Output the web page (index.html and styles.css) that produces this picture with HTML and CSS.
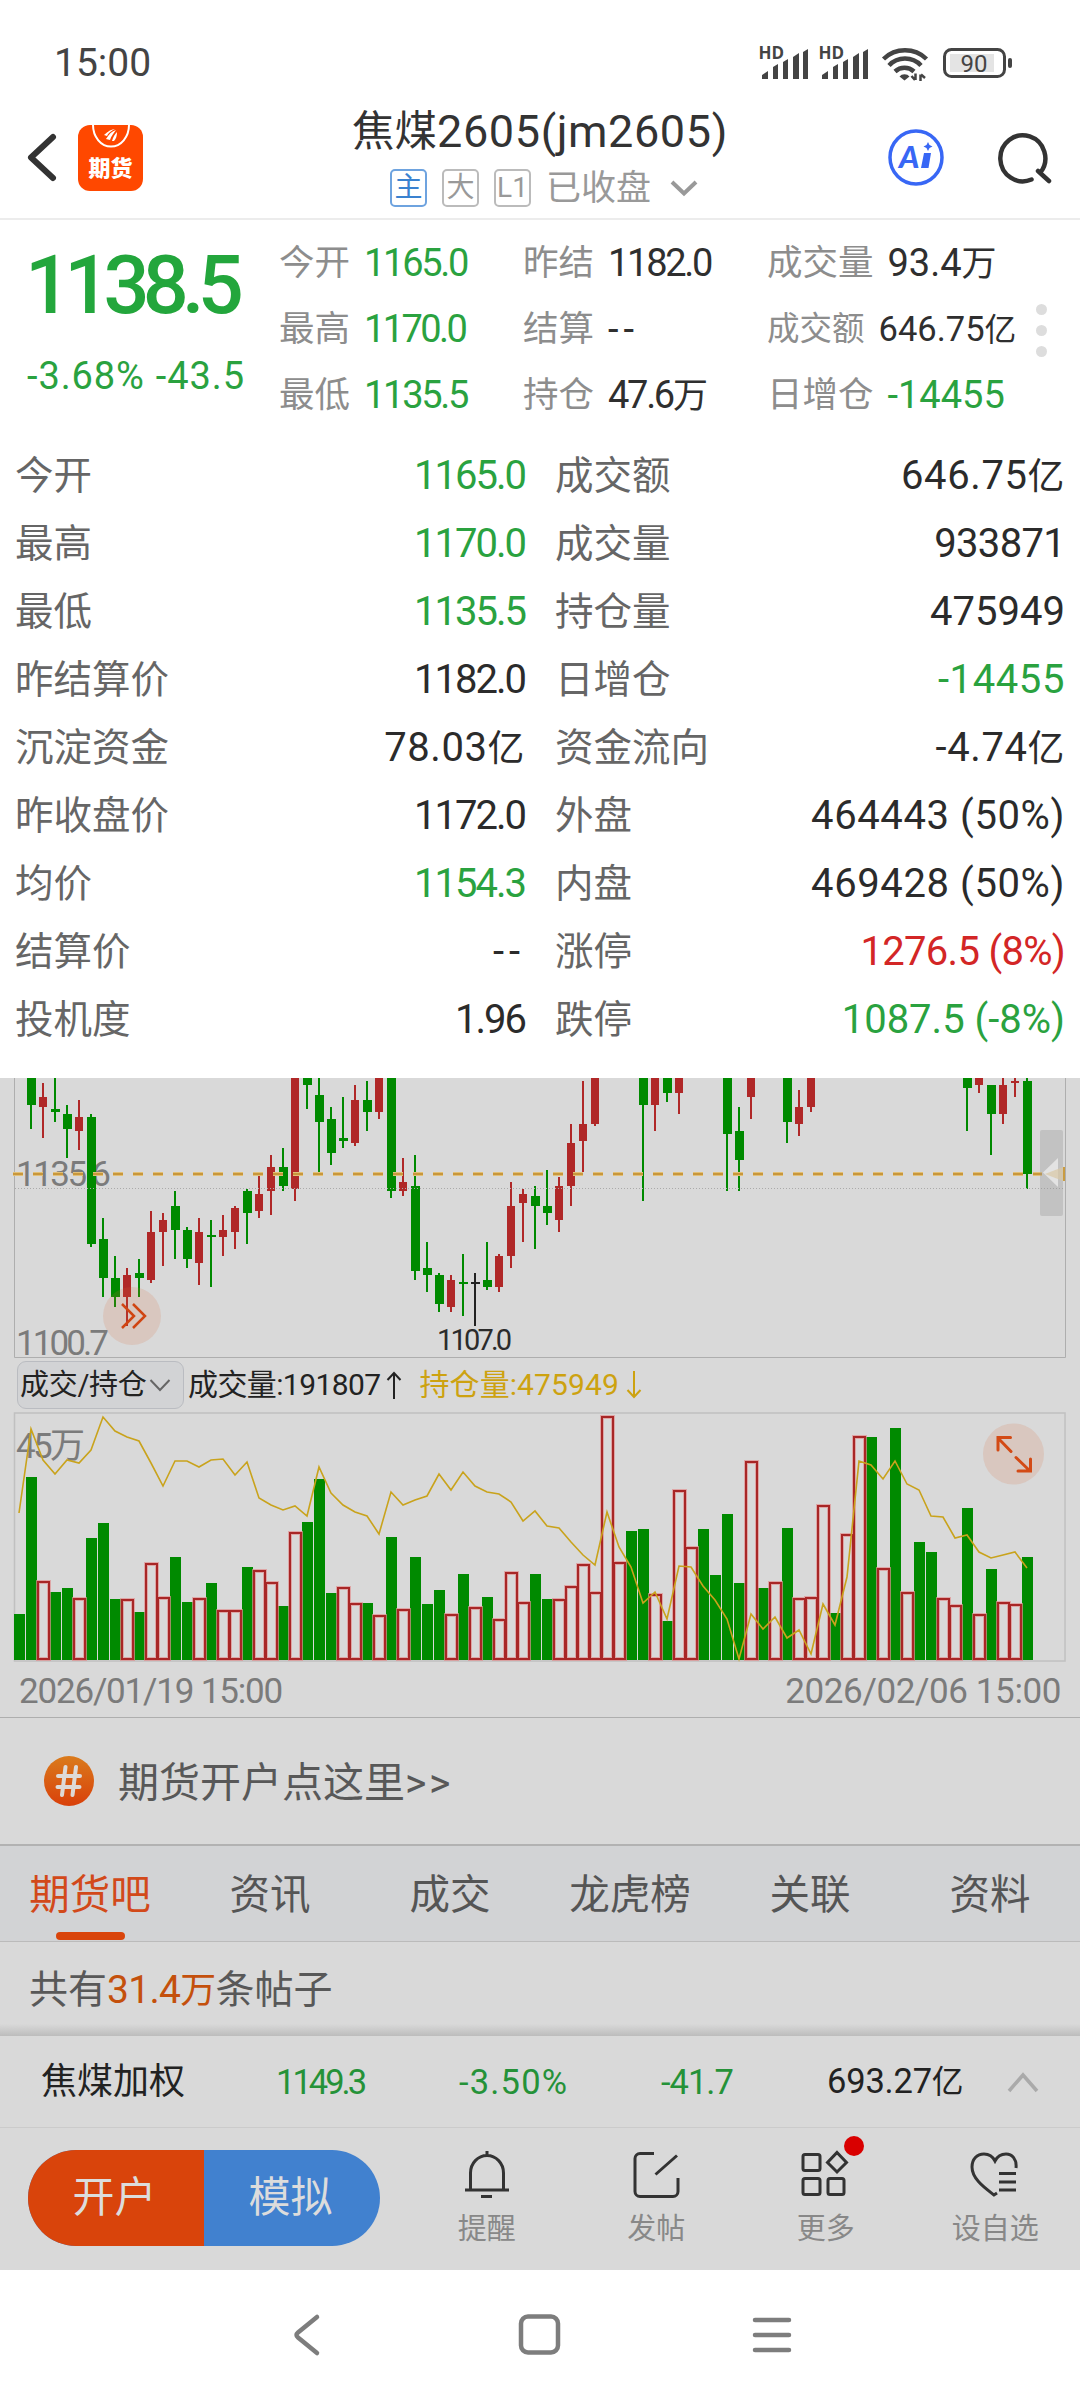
FILE: index.html
```html
<!DOCTYPE html>
<html lang="zh-CN">
<head>
<meta charset="utf-8">
<title>焦煤2605(jm2605)</title>
<link rel="stylesheet" href="styles.css">
</head>
<body>
<div class="status">
  <span class="clock">15:00</span>
  <svg class="status-icons" width="256" height="40" viewBox="758 42 256 40">
    <g fill="#444">
      <text x="758.5" y="59" class="hd">HD</text>
      <path id="sig" d="M762 79v-4l6-4v8zM773 79V67l5-3v15zM783 79V62l5-3v20zM793 79V57l6-4v26zM803 79V52l5-3v30z"/>
      <text x="818.5" y="59" class="hd">HD</text>
      <use href="#sig" x="60"/>
      <path d="M904.500 80.500l-5-4a6 5 0 0 1 10 0z"/>
      <path d="M915.500 73.500v6.500M915 80l-3.500-4M920.500 81v-6.500M921 74.500l4 3.500" fill="none" stroke="#444" stroke-width="2.500"/>
      <path d="M883.500 59a31 31 0 0 1 43 0M889 65.500a22 22 0 0 1 32 0M895 71.500a14 14 0 0 1 19 0" fill="none" stroke="#444" stroke-width="4.500"/>
      <rect x="1008" y="58" width="4" height="10" rx="2"/>
    </g>
    <rect x="950" y="54" width="44" height="18" fill="#e4e4e4"/>
    <rect x="944.500" y="49.500" width="60" height="27" rx="7" fill="none" stroke="#444" stroke-width="3"/>
    <text x="974" y="71.500" class="batt">90</text>
  </svg>
</div>

<header class="header">
  <div class="head-left">
    <svg width="32" height="50" viewBox="26 133 32 50"><path d="M53 137L31 157.500 53 178" fill="none" stroke="#333" stroke-width="6" stroke-linecap="round" stroke-linejoin="round"/></svg>
    <div class="logo">
      <svg width="65" height="26" viewBox="0 0 65 26"><path d="M15 0a17.500 21 0 0 0 36 0" fill="none" stroke="#fff" stroke-width="2"/><path d="M26 10c4-4 8-6 11-6-4 2-7 4-8 7zM28 14c3-5 6-8 10-9-2 3-5 6-6 10zM34 16c1-4 3-7 5-9 0 4-1 7-3 9z" fill="#fff"/></svg>
      <span>期货</span>
    </div>
  </div>
  <div class="head-mid">
    <div class="title">焦煤<span>2605(jm2605)</span></div>
    <div class="sub"><b class="tag main">主</b><b class="tag">大</b><b class="tag">L1</b><span>已收盘</span>
      <svg width="30" height="20" viewBox="0 0 30 20"><path d="M3 4l12 11.500L27 4" fill="none" stroke="#999" stroke-width="4"/></svg></div>
  </div>
  <div class="head-right">
    <svg width="56" height="58" viewBox="888 129 56 58"><ellipse cx="916" cy="157.500" rx="26" ry="26.500" fill="none" stroke="#3867f5" stroke-width="3.500"/><text x="899" y="167.500" class="ai">A</text><path d="M924 153h7l-2.500 15h-7.500zM928 142l1.500 3 3 1.500-3 1.500-1.500 3-1.500-3-3-1.500 3-1.500z" fill="#3867f5"/></svg>
    <svg width="56" height="58" viewBox="998 129 56 58"><path d="M1031.500 179.500A22.500 23 0 1 1 1040.500 172.500M1038 171l11 10" fill="none" stroke="#333" stroke-width="4.500" stroke-linecap="round"/></svg>
  </div>
</header>

<section class="quote">
  <div class="last">
    <div class="price">1138.5</div>
    <div class="chg"><span>-3.68%</span><span>-43.5</span></div>
  </div>
  <div class="stats">
    <div><span>今开</span><em class="green t2">1165.0</em></div><div><span>昨结</span><em class="t2">1182.0</em></div><div><span>成交量</span><em>93.4<i>万</i></em></div>
    <div><span>最高</span><em class="green t3">1170.0</em></div><div><span>结算</span><em class="w3">--</em></div><div class="small"><span>成交额</span><em>646.75<i>亿</i></em></div>
    <div><span>最低</span><em class="green t2">1135.5</em></div><div><span>持仓</span><em class="t2">47.6<i>万</i></em></div><div><span>日增仓</span><em class="green">-14455</em></div>
  </div>
  <div class="dots"><u></u><u></u><u></u></div>
</section>

<section class="table">
  <div><span>今开</span><em class="green t2">1165.0</em></div><div><span>成交额</span><em class="w1">646.75<i>亿</i></em></div>
  <div><span>最高</span><em class="green t2">1170.0</em></div><div><span>成交量</span><em class="t1">933871</em></div>
  <div><span>最低</span><em class="green t2">1135.5</em></div><div><span>持仓量</span><em>475949</em></div>
  <div><span>昨结算价</span><em class="t2">1182.0</em></div><div><span>日增仓</span><em class="green w1">-14455</em></div>
  <div><span>沉淀资金</span><em class="w1">78.03<i>亿</i></em></div><div><span>资金流向</span><em class="w1">-4.74<i>亿</i></em></div>
  <div><span>昨收盘价</span><em class="t2">1172.0</em></div><div><span>外盘</span><em class="w1">464443 (50%)</em></div>
  <div><span>均价</span><em class="green t2">1154.3</em></div><div><span>内盘</span><em class="w1">469428 (50%)</em></div>
  <div><span>结算价</span><em class="w3">--</em></div><div><span>涨停</span><em class="red t1">1276.5 (8%)</em></div>
  <div><span>投机度</span><em class="t2">1.96</em></div><div><span>跌停</span><em class="green">1087.5 (-8%)</em></div>
</section>

<main class="dim">
  <svg class="kline" width="1080" height="280" viewBox="0 1078 1080 280">
    <path d="M14.500 1078V1357.500H1065.500V1078" fill="none" stroke="#aeaeae"/>
    <text x="16" y="1186" class="axis" textLength="95">1135.6</text>
    <text x="16" y="1355" class="axis" textLength="93">1100.7</text>
    <g stroke="#008a00">
      <path stroke-width="2" d="M31 1078V1129M55 1078V1122M67 1105V1158M91 1114V1247M103 1218V1297M115 1256V1307M139 1259V1297M175 1191V1259M187 1227V1268M211 1220V1287M247 1189V1244M283 1148V1191M307 1078V1109M319 1078V1173M331 1107V1165M343 1097V1148M367 1081V1131M391 1078V1198M415 1155V1280M427 1242V1292M439 1273V1312M463 1254V1316M487 1242V1290M535 1186V1249M547 1170V1225M643 1078V1201M667 1078V1102M727 1078V1191M739 1107V1191M787 1078V1143M967 1078V1131M991 1085V1155M1027 1078V1189"/>
      <path stroke-width="9" d="M31.500 1078V1105M55.500 1109V1112M67.500 1114V1129M91.500 1117V1244M103.500 1239V1278M115.500 1278V1297M139.500 1273V1278M175.500 1206V1230M187.500 1230V1259M211.500 1235V1237M247.500 1191V1213M283.500 1167V1186M307.500 1078V1085M319.500 1095V1122M331.500 1119V1153M343.500 1138V1141M367.500 1100V1112M391.500 1078V1191M415.500 1186V1271M427.500 1268V1275M439.500 1275V1304M463.500 1282V1284M487.500 1280V1287M535.500 1196V1206M547.500 1206V1213M643.500 1078V1105M667.500 1078V1093M727.500 1078V1134M739.500 1131V1160M787.500 1078V1122M967.500 1078V1088M991.500 1085V1114M1027.500 1081V1174"/>
    </g>
    <g stroke="#b02828">
      <path stroke-width="2" d="M43 1083V1138M79 1100V1150M127 1268V1326M151 1211V1283M163 1213V1266M199 1218V1285M223 1215V1256M235 1206V1249M259 1172V1218M271 1155V1215M295 1078V1201M355 1085V1146M379 1078V1119M403 1158V1196M451 1275V1312M499 1254V1292M511 1182V1268M523 1189V1242M559 1177V1232M571 1124V1206M583 1081V1172M595 1078V1126M655 1078V1131M679 1078V1114M751 1078V1119M799 1090V1136M811 1078V1112M979 1078V1093M1003 1078V1124M1015 1078V1097"/>
      <path stroke-width="8" d="M43 1097V1107M79 1117V1131M127 1275V1297M151 1232V1280M163 1220V1232M199 1232V1263M223 1230V1237M235 1208V1232M259 1194V1211M271 1167V1191M295 1078V1189M355 1100V1143M379 1078V1112M403 1182V1191M451 1280V1307M499 1256V1287M511 1206V1256M523 1194V1203M559 1186V1220M571 1143V1186M583 1124V1141M595 1078V1124M655 1078V1105M679 1078V1093M751 1078V1097M799 1107V1124M811 1078V1107M979 1078V1085M1003 1085V1114M1015 1081V1083"/>
    </g>
    <path d="M475 1273V1326M471 1283h9" stroke="#222" stroke-width="2"/>
    <text x="437" y="1349.500" class="low" textLength="75">1107.0</text>
    <path d="M15 1188.500H1065" stroke="#aaa" stroke-dasharray="1 2"/>
    <path d="M13 1174H1042" stroke="#e2c078" stroke-width="4" stroke-dasharray="10 10"/>
    <path d="M13 1174H1042" stroke="#c8973c" stroke-width="2" stroke-dasharray="10 10"/>
    <path d="M1063 1167h2v14h-2z" fill="#c99c42"/>
    <rect x="1040" y="1130" width="23" height="86" rx="2" fill="#999" fill-opacity=".35"/>
    <path d="M1043 1172.500L1058 1158v29z" fill="#e3e3e3"/>
    <path d="M1045 1174L1063 1167v14z" fill="#d8c7a5" fill-opacity=".7"/>
    <circle cx="132" cy="1316" r="29" fill="#d9683a" fill-opacity=".16"/>
    <path d="M122 1304l12 12-12 12M133 1304l12 12-12 12" fill="none" stroke="#d04512" stroke-width="2.500"/>
  </svg>

  <div class="indicator">
    <div class="chip">成交/持仓<svg width="22" height="16" viewBox="0 0 22 16"><path d="M1.500 3L11 13 20.500 3" fill="none" stroke="#666" stroke-width="2"/></svg></div>
    <span class="vol">成交量:191807</span>
    <svg width="16" height="30" viewBox="0 0 16 30"><path d="M8 29V3M1.500 10L8 3l6.500 7" fill="none" stroke="#222" stroke-width="2"/></svg>
    <span class="oi">持仓量:475949</span>
    <svg width="16" height="30" viewBox="0 0 16 30"><path d="M8 1v26M1.500 20L8 27l6.500-7" fill="none" stroke="#cda210" stroke-width="2"/></svg>
  </div>

  <svg class="volume" width="1080" height="250" viewBox="0 1412 1080 250">
    <defs><path id="up" d="M38 1659V1582h11V1659zM74 1659V1599h11V1659zM122 1659V1600h11V1659zM146 1659V1564h11V1659zM158 1659V1598h11V1659zM194 1659V1599h11V1659zM218 1659V1611h11V1659zM230 1659V1611h11V1659zM254 1659V1571h11V1659zM266 1659V1583h11V1659zM290 1659V1533h11V1659zM338 1659V1588h11V1659zM350 1659V1604h11V1659zM374 1659V1616h11V1659zM398 1659V1610h11V1659zM446 1659V1615h11V1659zM470 1659V1608h11V1659zM494 1659V1620h11V1659zM506 1659V1573h11V1659zM518 1659V1603h11V1659zM554 1659V1600h11V1659zM566 1659V1587h11V1659zM578 1659V1565h11V1659zM590 1659V1593h11V1659zM602 1659V1417h11V1659zM614 1659V1563h11V1659zM650 1659V1595h11V1659zM674 1659V1491h11V1659zM686 1659V1548h11V1659zM746 1659V1462h11V1659zM770 1659V1583h11V1659zM794 1659V1599h11V1659zM806 1659V1598h11V1659zM818 1659V1506h11V1659zM842 1659V1535h11V1659zM854 1659V1437h11V1659zM878 1659V1569h11V1659zM902 1659V1593h11V1659zM938 1659V1599h11V1659zM950 1659V1606h11V1659zM974 1659V1615h11V1659zM998 1659V1603h11V1659zM1010 1659V1605h11V1659z"/></defs>
    <rect x="14.500" y="1413" width="1050.500" height="248" fill="none" stroke="#c0c0c0" stroke-width="1.500"/>
    <path stroke="#008a00" stroke-width="11" d="M19.500 1660V1614M31.500 1660V1477M55.500 1660V1592M67.500 1660V1588M91.500 1660V1538M103.500 1660V1523M115.500 1660V1599M139.500 1660V1612M175.500 1660V1557M187.500 1660V1602M211.500 1660V1583M247.500 1660V1567M283.500 1660V1606M307.500 1660V1522M319.500 1660V1479M331.500 1660V1593M367.500 1660V1603M391.500 1660V1537M415.500 1660V1557M427.500 1660V1604M439.500 1660V1590M463.500 1660V1574M487.500 1660V1597M535.500 1660V1574M547.500 1660V1599M631.500 1660V1531M643.500 1660V1529M667.500 1660V1621M703.500 1660V1529M715.500 1660V1575M727.500 1660V1514M739.500 1660V1583M763.500 1660V1588M787.500 1660V1528M835.500 1660V1613M871.500 1660V1437M895.500 1660V1428M919.500 1660V1542M931.500 1660V1552M967.500 1660V1508M991.500 1660V1569M1027.500 1660V1557"/>
    <g fill="none">
      <use href="#up" stroke="#e09090" stroke-opacity=".7" stroke-width="4"/>
      <use href="#up" stroke="#a82626" stroke-width="2"/>
      <text x="16" y="1458" class="axis" textLength="69">45万</text>
      <polyline stroke="#c9a31c" stroke-width="1.600" points="19,1513 31,1429 43,1460 55,1474 67,1460 79,1463 91,1450 103,1417 115,1431 127,1437 139,1441 151,1463 163,1486 175,1461 187,1461 199,1467 211,1460 223,1459 235,1475 247,1462 259,1498 271,1505 283,1510 295,1506 307,1516 319,1467 331,1493 343,1505 355,1512 367,1516 379,1534 391,1492 403,1505 415,1500 427,1496 439,1474 451,1490 463,1472 475,1486 487,1492 499,1494 511,1502 523,1521 535,1511 547,1526 559,1528 571,1542 583,1555 595,1565 607,1512 619,1547 631,1567 643,1603 655,1592 667,1619 679,1566 691,1567 703,1586 715,1600 727,1619 739,1659 751,1614 763,1629 775,1617 787,1638 799,1630 811,1654 823,1604 835,1625 847,1577 859,1461 871,1465 883,1479 895,1461 907,1484 919,1490 931,1516 943,1517 955,1538 967,1535 979,1552 991,1558 1003,1555 1015,1552 1027,1568"/>
    </g>
    <circle cx="1013.500" cy="1454" r="30.500" fill="#d9683a" fill-opacity=".16"/>
    <path d="M1011 1451.500L998 1438M998 1450v-12.500h12.500M1016 1457.500l14 13.500M1018 1471h12.500V1459" fill="none" stroke="#d34a15" stroke-width="3" stroke-linecap="round"/>
  </svg>
  <div class="dates"><span class="d1">2026/01/19 15:00</span><span class="d2">2026/02/06 15:00</span></div>

  <div class="promo">
    <svg width="50" height="50" viewBox="0 0 50 50"><defs><linearGradient id="og" x2="0" y2="1"><stop stop-color="#da7b1c"/><stop offset="1" stop-color="#d9400a"/></linearGradient></defs><circle cx="25" cy="25" r="25" fill="url(#og)"/><path d="M21.500 11l-3.500 28M32 11l-3.500 28M14 20h22M13.500 31h22" stroke="#dedad7" stroke-width="4" stroke-linecap="round"/></svg>
    <span>期货开户点这里<em>&gt;&gt;</em></span>
  </div>
  <nav class="tabs"><a class="on">期货吧</a><a>资讯</a><a>成交</a><a>龙虎榜</a><a>关联</a><a>资料</a></nav>
  <div class="count">共有<span>31.4<i>万</i></span>条帖子</div>
  <div class="index">
    <span class="nm">焦煤加权</span><em class="g2 v1">1149.3</em><em class="g2 v2">-3.50%</em><em class="g2 v3">-41.7</em><em class="v4">693.27<i>亿</i></em>
    <svg width="34" height="24" viewBox="0 0 34 24"><path d="M3 21L17 5l14 16" fill="none" stroke="#aaa" stroke-width="3.500"/></svg>
  </div>
  <div class="actions">
    <div class="pill"><span>开户</span><span>模拟</span></div>
    <div class="acts">
      <div><svg width="60" height="56" viewBox="457 2148 60 56"><path d="M487 2151v4M470.500 2190V2173a16.500 17.500 0 0 1 33 0v17M465 2190h44M481 2196.500h11" class="ic"/></svg><span>提醒</span></div>
      <div><svg width="60" height="56" viewBox="626 2148 60 56"><path d="M654 2153.500H640a5 5 0 0 0-5 5v33a5 5 0 0 0 5 5h33a5 5 0 0 0 5-5V2178M677 2155.500l-21.500 19" class="ic"/></svg><span>发帖</span></div>
      <div class="more"><svg width="60" height="56" viewBox="796 2148 60 56"><path d="M805 2154.500h13a2 2 0 0 1 2 2v12a2 2 0 0 1-2 2H805a2 2 0 0 1-2-2v-12a2 2 0 0 1 2-2zM805 2178.500h13a2 2 0 0 1 2 2v12a2 2 0 0 1-2 2H805a2 2 0 0 1-2-2v-12a2 2 0 0 1 2-2zM830 2178.500h12a2 2 0 0 1 2 2v12a2 2 0 0 1-2 2H830a2 2 0 0 1-2-2v-12a2 2 0 0 1 2-2zM837 2152.500l9.500 10-9.500 9.500-9.500-9.500z" class="ic"/></svg><u></u><span>更多</span></div>
      <div><svg width="60" height="56" viewBox="965 2148 60 56"><path d="M1016 2168c1-9-4-14-10-14-5 0-9 3-11 7-2-4-6-7-11-7-7 0-12 5-12 13 0 12 13 21 22 28l3-2M999 2173.500h17M999 2182h17M999 2190h17" class="ic"/></svg><span>设自选</span></div>
    </div>
  </div>
</main>

<footer class="nav">
  <svg width="1080" height="130" viewBox="0 2270 1080 130" fill="none" stroke="#7d7d7d" stroke-width="4.500" stroke-linecap="round" stroke-linejoin="round"><path d="M317 2317l-19 15.500q-3 2.500 0 5L317 2353"/><rect x="521" y="2316.500" width="37" height="36" rx="7"/><path d="M755 2320h34M755 2335h34M755 2350h34"/></svg>
</footer>
</body>
</html>
```
FILE: styles.css
```css
* { box-sizing: border-box; }
body { margin: 0; width: 1080px; height: 2400px; overflow: hidden; background: #fff; color: #2b2b2b; font-family: Roboto, "Noto Sans CJK SC", sans-serif; }
em, i { font-style: normal; }
u { text-decoration: none; }
b { font-weight: 400; }
svg { display: block; flex: none; overflow: visible; }
i { font-size: 0.92em; }
.green { color: #2aa23f; }
.red { color: #d32626; }
.t1 { letter-spacing: -0.7px; }
.t2 { letter-spacing: -2px; }
.t3 { letter-spacing: -2.6px; }
.w1 { letter-spacing: 0.6px; }
.w3 { letter-spacing: 5px; }

.status { display: flex; justify-content: space-between; height: 96px; padding: 42px 66px 0 54px; }
.clock { font-size: 39px; line-height: 43px; color: #444; }
.hd { font: 700 17px "Open Sans", sans-serif; }
.batt { font: 24px Roboto, sans-serif; fill: #444; text-anchor: middle; }

.header { display: grid; grid-template-columns: 300px 1fr 300px; height: 124px; border-bottom: 2px solid #ececec; }
.head-left { display: flex; align-items: center; gap: 20px; padding: 1px 0 0 26px; }
.logo { width: 65px; height: 66px; border-radius: 12px; background: #ff4800; color: #fff; overflow: hidden; }
.logo span { display: block; text-align: center; font-size: 22px; line-height: 36px; font-weight: 900; }
.title { display: flex; justify-content: center; padding-top: 10px; font-size: 42.5px; line-height: 51px; color: #333; white-space: nowrap; }
.title span { font-size: 45px; letter-spacing: 0.6px; }
.sub { display: flex; align-items: center; height: 50px; margin-top: 6px; padding-left: 90px; color: #999; font-size: 35px; }
.tag { display: flex; align-items: center; justify-content: center; width: 37px; height: 38px; margin-right: 15px; border: 2px solid #bbb; border-radius: 5px; font-size: 28px; line-height: 34px; }
.main { color: #3a82d0; border-color: #6ea3df; }
.sub span { margin: 0 18px 0 0; line-height: 50px; padding-top: 2px; }
.head-right { display: flex; align-items: center; gap: 54px; padding: 2px 0 0 108px; }
.ai { font: italic 900 31px Lato, sans-serif; fill: #3867f5; }

.quote { display: flex; height: 221px; position: relative; }
.last { width: 279px; padding: 18px 0 0 25px; color: #23a63c; }
.price { font-size: 81px; line-height: 96px; font-weight: 500; letter-spacing: -6.8px; }
.chg { display: flex; gap: 11px; margin: 19px 0 0 2px; font-size: 38px; line-height: 46px; letter-spacing: 0.9px; color: #2aa23f; white-space: nowrap; }
.stats { display: grid; grid-template-columns: 244px 244px 1fr; grid-template-rows: repeat(3, 66px); padding-top: 10px; flex: 1; font-size: 35.5px; line-height: 66px; color: #8d8d8d; }
.stats div { display: flex; white-space: nowrap; gap: 14px; }
.stats em { font-size: 38px; }
.stats em.t2 { letter-spacing: -2.3px; }
.stats em:not(.green) { color: #2f2f2f; }
.stats .small { font-size: 32.5px; line-height: 67px; }
.stats .small em { font-size: 34.5px; }
.dots { position: absolute; left: 1036px; top: 84px; display: grid; gap: 10px; }
.dots u { width: 11px; height: 11px; border-radius: 50%; background: #ddd; }

.table { display: grid; grid-template-columns: 510px 510px; column-gap: 30px; grid-auto-rows: 68px; padding: 1px 15px 24px; height: 637px; font-size: 38.5px; line-height: 68px; }
.table div { display: flex; justify-content: space-between; }
.table span { color: #666; }
.table em { font-size: 40px; }

.dim { height: 1192px; background: #d9d9d9; color: #222; }
.axis { font: 35px Roboto, "Noto Sans CJK SC", sans-serif; fill: #7b7b7b; }
.low { font: 29px Roboto, sans-serif; fill: #2b2b2b; }
.indicator { display: flex; align-items: center; height: 54px; padding-left: 17px; font-size: 30px; line-height: 46px; white-space: nowrap; }
.chip { display: flex; align-items: center; gap: 3px; width: 167px; height: 48px; padding-left: 2px; border: 1px solid #babcc1; border-radius: 9px; background: #d2d3d5; font-size: 29px; letter-spacing: -0.3px; }
.vol { margin: 0 6px 0 4px; letter-spacing: -0.6px; }
.oi { margin: 0 7px 0 17px; color: #cda210; letter-spacing: 0.1px; }
.dates { display: flex; justify-content: space-between; height: 56px; padding: 0 19px; font-size: 35px; line-height: 59px; color: #7b7b7b; border-bottom: 1.5px solid #aeaeae; }
.d1 { letter-spacing: -1.2px; }
.d2 { letter-spacing: -0.4px; }
.promo { display: flex; align-items: center; gap: 24px; height: 128px; padding-left: 44px; font-size: 41px; color: #585858; border-bottom: 2px solid #b2b2b2; }
.promo span { margin-top: -4px; }
.promo em { letter-spacing: 2.5px; }
.tabs { display: grid; grid-template-columns: repeat(6, 1fr); height: 96px; background: #d2d3d5; border-bottom: 1px solid #bbb; font-size: 40.5px; line-height: 99px; text-align: center; color: #555; }
.on { position: relative; color: #d2491a; }
.on::after { content: ""; position: absolute; left: 56px; top: 86px; width: 69px; height: 8px; border-radius: 4px; background: #d9440b; }
.count { height: 94px; padding-left: 29px; font-size: 39px; line-height: 97px; color: #585858; background: linear-gradient(#d9d9d9 82px, #bcbcbc); }
.count span { color: #c4500c; letter-spacing: -0.7px; }
.index { display: grid; grid-template-columns: 235px 183px 202px 166px 179px 34px; align-items: center; height: 92px; padding-left: 41px; font-size: 36px; line-height: 60px; border-bottom: 1px solid #cbcbcb; white-space: nowrap; }
.index em { font-size: 34.5px; }
.g2 { color: #259238; }
.v1 { letter-spacing: -3px; }
.v2 { letter-spacing: 1.2px; }
.v3 { letter-spacing: -1px; }
.v4 { letter-spacing: -0.2px; }
.actions { display: flex; align-items: center; height: 142px; padding-left: 28px; }
.pill { display: grid; grid-template-columns: 1fr 1fr; width: 352px; height: 96px; margin-top: -2px; border-radius: 48px; overflow: hidden; background: #4181cf; color: #dcdcdc; font-size: 42px; line-height: 96px; text-align: center; }
.pill span { text-indent: -3px; }
.pill span:first-child { background: #d9440b; }
.acts { display: grid; grid-template-columns: repeat(4, 1fr); width: 678px; margin-left: 22px; height: 142px; padding-top: 20px; }
.acts div { display: grid; justify-items: center; grid-template-rows: 56px 44px; position: relative; color: #888; font-size: 29px; line-height: 50px; }
.ic { fill: none; stroke: #333; stroke-width: 3; }
.more u { position: absolute; left: 103px; top: -12px; width: 20px; height: 20px; border-radius: 50%; background: #d90000; }
.nav { height: 130px; background: #fff; }
```
